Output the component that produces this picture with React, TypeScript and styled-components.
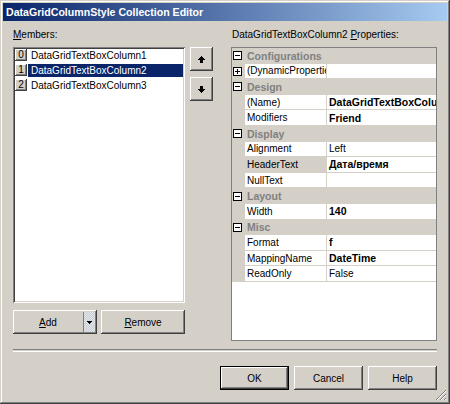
import React from "react";
import styled, { createGlobalStyle } from "styled-components";

const Global = createGlobalStyle`
  html, body {
    margin: 0;
    padding: 0;
    background: #d4d0c8;
  }
  body {
    font-family: "Liberation Sans", Arial, sans-serif;
    font-size: 10px;
    color: #000;
  }
`;

const raised = `
  box-shadow: inset -1px -1px #404040, inset 1px 1px #ffffff,
    inset -2px -2px #808080, inset 2px 2px #d4d0c8;
`;

const Window = styled.div`
  position: relative;
  width: 450px;
  height: 404px;
  box-sizing: border-box;
  padding: 3px;
  background: #d4d0c8;
  box-shadow: inset -1px -1px #404040, inset 1px 1px #d4d0c8,
    inset -2px -2px #808080, inset 2px 2px #ffffff;
  display: flex;
  flex-direction: column;
`;

const TitleBar = styled.div`
  height: 18px;
  padding-left: 3px;
  display: flex;
  align-items: center;
  background: linear-gradient(to right, #0a246a, #a6caf0);
  color: #fff;
  font-weight: bold;
  font-size: 10.6px;
`;

const Body = styled.div`
  flex: 1;
  padding: 7px 10px 0 10px;
  display: flex;
  flex-direction: column;
`;

const Top = styled.div`
  display: flex;
  height: 313px;
`;

const LeftPane = styled.div`
  width: 200px;
  display: flex;
  flex-direction: column;
`;

const RightPane = styled.div`
  width: 206px;
  margin-left: 18px;
  display: flex;
  flex-direction: column;
`;

const Label = styled.div<{ indent?: number }>`
  height: 19px;
  line-height: 14px;
  padding-left: ${({ indent }) => indent ?? 0}px;
  white-space: nowrap;
`;

const ListRow = styled.div`
  display: flex;
  gap: 5px;
  height: 256px;
`;

const ListBox = styled.div`
  width: 172px;
  height: 256px;
  box-sizing: border-box;
  padding: 2px;
  background: #fff;
  box-shadow: inset 1px 1px #808080, inset -1px -1px #ffffff,
    inset 2px 2px #404040, inset -2px -2px #d4d0c8;
`;

const Item = styled.div`
  height: 15px;
  display: flex;
`;

const IndexBox = styled.div`
  width: 12px;
  height: 12px;
  box-sizing: border-box;
  background: #d4d0c8;
  ${raised}
  display: flex;
  align-items: center;
  justify-content: center;
  font-size: 10px;
  line-height: 12px;
`;

const ItemText = styled.div<{ selected?: boolean }>`
  flex: 1;
  margin-left: 1px;
  height: 13px;
  padding-left: 3px;
  line-height: 13px;
  background: ${({ selected }) => (selected ? "#0a246a" : "transparent")};
  color: ${({ selected }) => (selected ? "#fff" : "#000")};
`;

const ArrowCol = styled.div`
  display: flex;
  flex-direction: column;
  gap: 6px;
`;

const Button = styled.button<{ w: number; isDefault?: boolean }>`
  width: ${({ w }) => w}px;
  height: 24px;
  box-sizing: border-box;
  border: none;
  padding: 0;
  margin: 0;
  background: #d4d0c8;
  font-family: "Liberation Sans", Arial, sans-serif;
  font-size: 10px;
  color: #000;
  display: flex;
  align-items: center;
  justify-content: center;
  ${({ isDefault }) =>
    isDefault
      ? `box-shadow: inset 0 0 0 1px #000, inset -2px -2px #404040, inset 2px 2px #ffffff, inset -3px -3px #808080;`
      : raised}
`;

const SmallRow = styled.div`
  display: flex;
  gap: 4px;
  margin-top: 7px;
`;

const SplitButton = styled.div`
  width: 84px;
  height: 24px;
  display: flex;
  box-sizing: border-box;
  background: #d4d0c8;
  ${raised}
`;

const SplitMain = styled.div`
  width: 70px;
  display: flex;
  align-items: center;
  justify-content: center;
`;

const SplitDrop = styled.div`
  flex: 1;
  margin: 2px 2px 2px 0;
  border-left: 1px solid #808080;
  background: repeating-conic-gradient(#c9cdd6 0 25%, #e4e6ea 0 50%) 0 0 / 2px 2px;
  display: flex;
  align-items: center;
  justify-content: center;
`;

const U = styled.span`
  text-decoration: underline;
`;

const Grid = styled.div`
  height: 294px;
  box-sizing: border-box;
  border: 1px solid #808080;
  background: #fff;
  overflow: hidden;
`;

const Row = styled.div<{ cat?: boolean }>`
  height: 15.6px;
  display: grid;
  grid-template-columns: 13px 82px 1fr;
  background: ${({ cat }) => (cat ? "#d4d0c8" : "#fff")};
`;

const Gutter = styled.div`
  background: #d4d0c8;
  display: flex;
  align-items: center;
  padding-left: 1px;
`;

const CatText = styled.div`
  grid-column: 2 / 4;
  padding-left: 2px;
  font-weight: bold;
  font-size: 10.5px;
  color: #808080;
  display: flex;
  align-items: center;
`;

const Cell = styled.div<{ bold?: boolean; shaded?: boolean; divider?: boolean }>`
  box-sizing: border-box;
  border-bottom: 1px solid #d4d0c8;
  border-right: ${({ divider }) => (divider ? "1px solid #d4d0c8" : "none")};
  background: ${({ shaded }) => (shaded ? "#d4d0c8" : "#fff")};
  padding-left: 2px;
  display: flex;
  align-items: center;
  white-space: nowrap;
  overflow: hidden;
  font-weight: ${({ bold }) => (bold ? "bold" : "normal")};
  font-size: ${({ bold }) => (bold ? "10.5px" : "10px")};
`;

const Separator = styled.div`
  margin-top: 8px;
  height: 1px;
  border-top: 1px solid #808080;
  border-bottom: 1px solid #ffffff;
`;

const Footer = styled.div`
  margin-top: 14px;
  display: flex;
  justify-content: flex-end;
  gap: 5px;
`;

const Grip = styled.svg`
  position: absolute;
  right: 3px;
  bottom: 3px;
`;

const Box = ({ plus }: { plus?: boolean }) => (
  <svg width="9" height="9" viewBox="0 0 9 9" shapeRendering="crispEdges">
    <rect x="0.5" y="0.5" width="8" height="8" fill="#fff" stroke="#000" />
    <rect x="2" y="4" width="5" height="1" fill="#000" />
    {plus && <rect x="4" y="2" width="1" height="5" fill="#000" />}
  </svg>
);

const UpArrow = () => (
  <svg width="7" height="7" viewBox="0 0 7 7" shapeRendering="crispEdges">
    <path d="M3 0h1v1h-1z M2 1h3v1h-3z M1 2h5v1h-5z M0 3h7v1h-7z M2 4h3v3h-3z" fill="#000" />
  </svg>
);

const DownArrow = () => (
  <svg width="7" height="7" viewBox="0 0 7 7" shapeRendering="crispEdges">
    <path d="M2 0h3v3h-3z M0 3h7v1h-7z M1 4h5v1h-5z M2 5h3v1h-3z M3 6h1v1h-1z" fill="#000" />
  </svg>
);

type Prop = { cat?: string; name?: string; value?: string; bold?: boolean; plus?: boolean; sel?: boolean };

const props: Prop[] = [
  { cat: "Configurations" },
  { name: "(DynamicProperties)", value: "", plus: true },
  { cat: "Design" },
  { name: "(Name)", value: "DataGridTextBoxColumn2", bold: true },
  { name: "Modifiers", value: "Friend", bold: true },
  { cat: "Display" },
  { name: "Alignment", value: "Left" },
  { name: "HeaderText", value: "Дата/время", bold: true, sel: true },
  { name: "NullText", value: "" },
  { cat: "Layout" },
  { name: "Width", value: "140", bold: true },
  { cat: "Misc" },
  { name: "Format", value: "f", bold: true },
  { name: "MappingName", value: "DateTime", bold: true },
  { name: "ReadOnly", value: "False" },
];

const members = ["DataGridTextBoxColumn1", "DataGridTextBoxColumn2", "DataGridTextBoxColumn3"];

export default function App() {
  return (
    <>
      <Global />
      <Window>
        <TitleBar>DataGridColumnStyle Collection Editor</TitleBar>
        <Body>
          <Top>
            <LeftPane>
              <Label>
                <U>M</U>embers:
              </Label>
              <ListRow>
                <ListBox>
                  {members.map((m, i) => (
                    <Item key={m}>
                      <IndexBox>{i}</IndexBox>
                      <ItemText selected={i === 1}>{m}</ItemText>
                    </Item>
                  ))}
                </ListBox>
                <ArrowCol>
                  <Button w={23}>
                    <UpArrow />
                  </Button>
                  <Button w={23}>
                    <DownArrow />
                  </Button>
                </ArrowCol>
              </ListRow>
              <SmallRow>
                <SplitButton>
                  <SplitMain>
                    <U>A</U>dd
                  </SplitMain>
                  <SplitDrop>
                    <svg width="5" height="3" viewBox="0 0 5 3" shapeRendering="crispEdges">
                      <path d="M0 0h5v1h-5z M1 1h3v1h-3z M2 2h1v1h-1z" fill="#000" />
                    </svg>
                  </SplitDrop>
                </SplitButton>
                <Button w={84}>
                  <span>
                    <U>R</U>emove
                  </span>
                </Button>
              </SmallRow>
            </LeftPane>
            <RightPane>
              <Label indent={1}>
                DataGridTextBoxColumn2 <U>P</U>roperties:
              </Label>
              <Grid>
                {props.map((p, i) =>
                  p.cat ? (
                    <Row cat key={i}>
                      <Gutter>
                        <Box />
                      </Gutter>
                      <CatText>{p.cat}</CatText>
                    </Row>
                  ) : (
                    <Row key={i}>
                      <Gutter>{p.plus && <Box plus />}</Gutter>
                      <Cell divider shaded={p.sel}>
                        {p.name}
                      </Cell>
                      <Cell bold={p.bold}>{p.value}</Cell>
                    </Row>
                  )
                )}
              </Grid>
            </RightPane>
          </Top>
          <Separator />
          <Footer>
            <Button w={69} isDefault>
              OK
            </Button>
            <Button w={69}>Cancel</Button>
            <Button w={69}>Help</Button>
          </Footer>
        </Body>
        <Grip width="12" height="12" viewBox="0 0 12 12" shapeRendering="crispEdges">
          <path d="M11 1 L1 11 M11 5 L5 11 M11 9 L9 11" stroke="#808080" strokeWidth="1.2" />
          <path d="M11 2 L2 11 M11 6 L6 11 M11 10 L10 11" stroke="#ffffff" strokeWidth="1" />
        </Grip>
      </Window>
    </>
  );
}
